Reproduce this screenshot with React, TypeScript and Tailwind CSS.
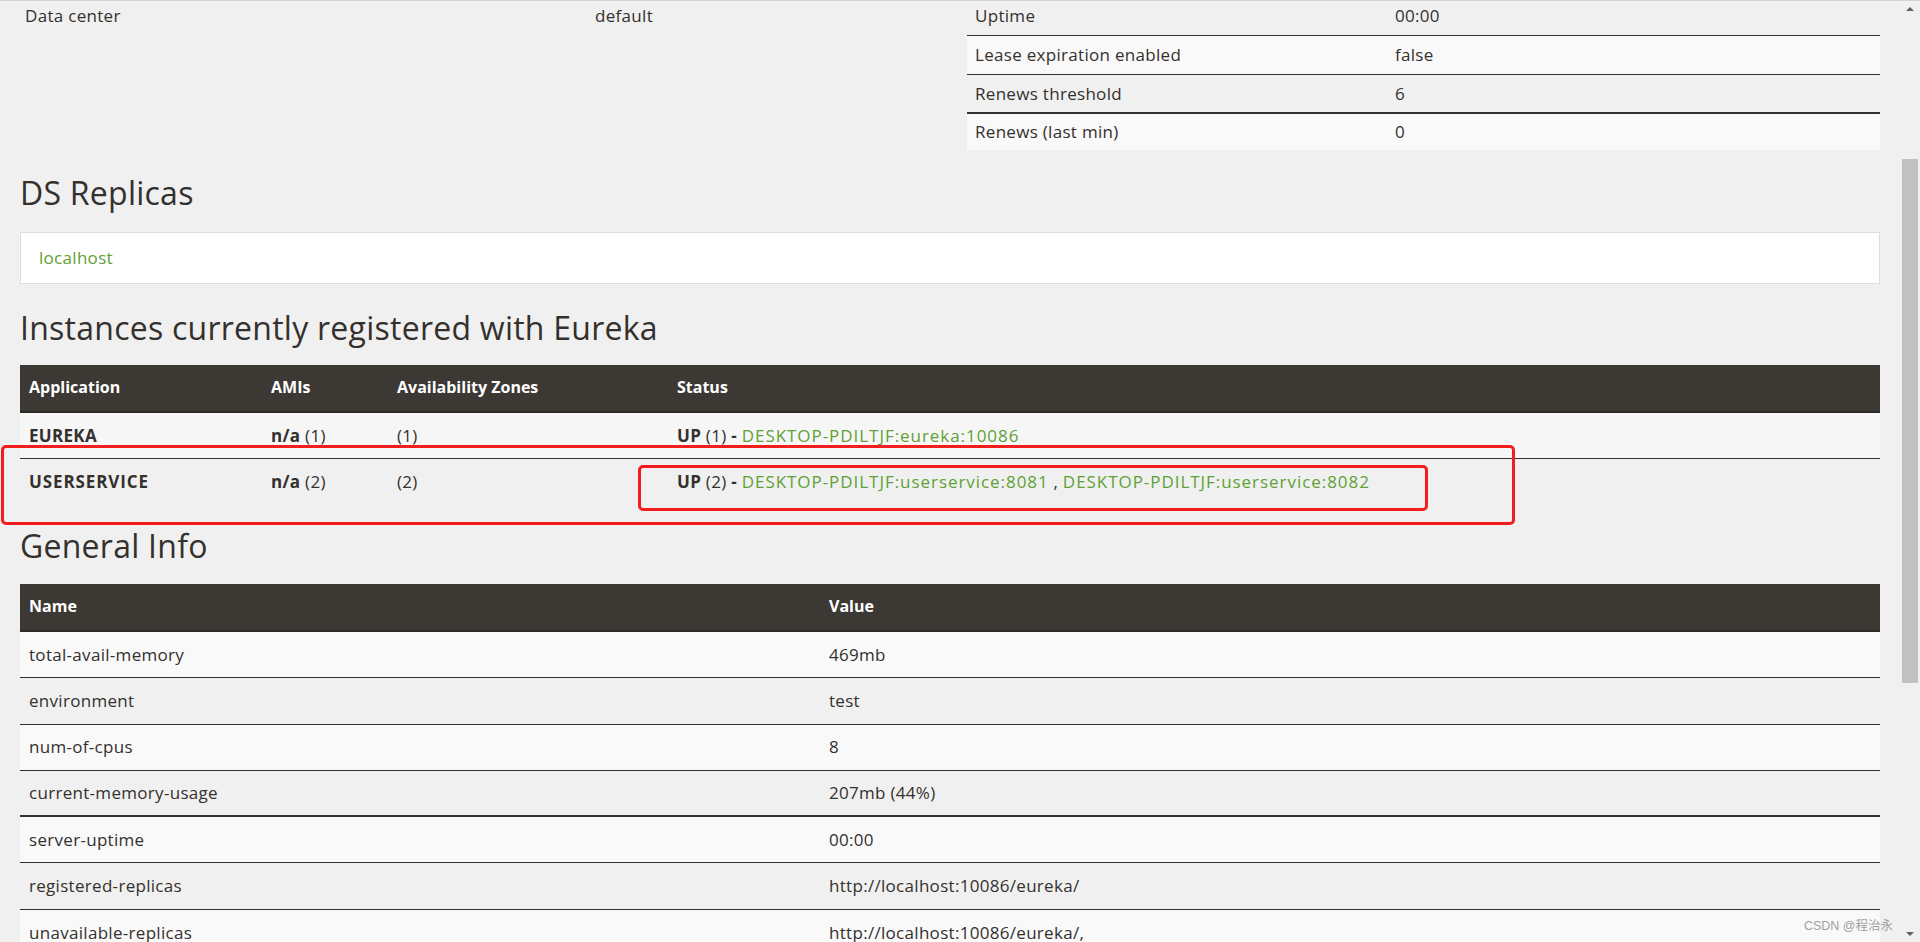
const INSTANCES = [
  {
    app: 'EUREKA',
    amis: '(1)',
    zones: '(1)',
    count: '(1)',
    links: ['DESKTOP-PDILTJF:eureka:10086'],
  },
  {
    app: 'USERSERVICE',
    amis: '(2)',
    zones: '(2)',
    count: '(2)',
    links: ['DESKTOP-PDILTJF:userservice:8081', 'DESKTOP-PDILTJF:userservice:8082'],
  },
];

const GENERAL_INFO: [string, string][] = [
  ['total-avail-memory', '469mb'],
  ['environment', 'test'],
  ['num-of-cpus', '8'],
  ['current-memory-usage', '207mb (44%)'],
  ['server-uptime', '00:00'],
  ['registered-replicas', 'http://localhost:10086/eureka/'],
  ['unavailable-replicas', 'http://localhost:10086/eureka/,'],
];

function SectionTitle({ children, className }: { children: string; className: string }) {
  return (
    <h2 className={`h-[36px] text-[32px] leading-[36px] tracking-[0.25px] font-normal text-[#34302d] ${className}`}>
      {children}
    </h2>
  );
}

function Scrollbar() {
  return (
    <aside className="w-[20px] shrink-0 flex flex-col bg-[#f0f0f0]">
      <div className="h-[16px] flex items-center justify-center">
        <div className="w-0 h-0 border-l-[4px] border-r-[4px] border-b-[4px] border-l-transparent border-r-transparent border-b-[#606060]" />
      </div>
      <div className="h-[142px]" />
      <div className="h-[524px] mx-[2px] bg-[#c1c1c1]" />
      <div className="flex-1" />
      <div className="h-[16px] flex items-center justify-center">
        <div className="w-0 h-0 border-l-[4px] border-r-[4px] border-t-[4px] border-l-transparent border-r-transparent border-t-[#606060]" />
      </div>
    </aside>
  );
}

export default function App() {
  return (
    <div className="relative w-[1920px] h-[942px] overflow-hidden flex bg-[#f0f0f0] border-t border-[#d4d4d4] text-[#34302d] text-[17px] tracking-[0.3px] font-['Open_Sans','Noto_Sans',sans-serif]">
      <main className="flex-1 px-[20px]">
        {/* top: environment + status tables (scrolled, first rows cut) */}
        <div className="-mt-[5px] grid grid-cols-[1fr_913px] gap-[27px]">
          <div>
            <div className="h-[39px] grid grid-cols-[570px_1fr] items-center px-[5px]">
              <span>Data center</span>
              <span>default</span>
            </div>
          </div>
          <div>
            <div className="h-[39px] grid grid-cols-[420px_1fr] items-center px-[8px]">
              <span>Uptime</span>
              <span>00:00</span>
            </div>
            <div className="h-[39px] grid grid-cols-[420px_1fr] items-center px-[8px] border-t border-[#34302d] bg-[#f9f9f9]">
              <span>Lease expiration enabled</span>
              <span>false</span>
            </div>
            <div className="h-[38px] grid grid-cols-[420px_1fr] items-center px-[8px] border-t border-[#34302d]">
              <span>Renews threshold</span>
              <span>6</span>
            </div>
            <div className="h-[38px] grid grid-cols-[420px_1fr] items-center px-[8px] border-t-2 border-[#34302d] bg-[#f9f9f9]">
              <span>Renews (last min)</span>
              <span>0</span>
            </div>
          </div>
        </div>

        <SectionTitle className="mt-[25px]">DS Replicas</SectionTitle>
        <div className="mt-[21px] h-[52px] flex items-center pl-[18px] bg-white border border-[#dddddd]">
          <a className="text-[#5fa134]">localhost</a>
        </div>

        <SectionTitle className="mt-[26px]">Instances currently registered with Eureka</SectionTitle>
        <div className="mt-[19px]">
          <div className="h-[48px] grid grid-cols-[242px_126px_280px_1fr] items-center px-[9px] pb-[3px] bg-[#3c3834] border-b-2 border-[#2e2a27] text-white text-[16px] tracking-normal font-bold">
            <span>Application</span>
            <span>AMIs</span>
            <span>Availability Zones</span>
            <span>Status</span>
          </div>
          {INSTANCES.map((inst, i) => (
            <div
              key={inst.app}
              className={`h-[46px] grid grid-cols-[242px_126px_280px_1fr] items-center px-[9px] ${
                i === 0 ? 'bg-[#f6f6f6] border-b border-[#34302d]' : ''
              }`}
            >
              <b className={i === 1 ? 'tracking-[0.9px]' : ''}>{inst.app}</b>
              <span>
                <b>n/a</b> {inst.amis}
              </span>
              <span>{inst.zones}</span>
              <span>
                <b>UP</b> {inst.count} <b>-</b>{' '}
                {inst.links.map((link, j) => (
                  <span key={link}>
                    {j > 0 && ' , '}
                    <a className="text-[#5fa134] tracking-[0.95px]">{link}</a>
                  </span>
                ))}
              </span>
            </div>
          ))}
        </div>

        <SectionTitle className="mt-[23px]">General Info</SectionTitle>
        <div className="mt-[20px]">
          <div className="h-[48px] grid grid-cols-[800px_1fr] items-center px-[9px] pb-[3px] bg-[#3c3834] border-b-2 border-[#2e2a27] text-white text-[16px] tracking-normal font-bold">
            <span>Name</span>
            <span>Value</span>
          </div>
          {GENERAL_INFO.map(([name, value], i) => (
            <div
              key={name}
              className={`h-[46.3px] grid grid-cols-[800px_1fr] items-center px-[9px] border-[#34302d] ${
                i === 3 ? 'border-b-2' : 'border-b'
              } ${i % 2 === 0 ? 'bg-[#f9f9f9]' : ''}`}
            >
              <span>{name}</span>
              <span>{value}</span>
            </div>
          ))}
        </div>
      </main>

      <Scrollbar />

      {/* red annotation boxes drawn over the screenshot */}
      <div className="absolute left-[1px] top-[444px] w-[1514px] h-[80px] border-[3px] border-[#f21d1d] rounded-[5px]" />
      <div className="absolute left-[638px] top-[464px] w-[790px] h-[46px] border-[3px] border-[#f21d1d] rounded-[5px]" />

      <div className="absolute right-[27px] bottom-[8px] text-[12.5px] leading-[16px] tracking-normal text-[#a0a0a0] font-['Liberation_Sans','Noto_Sans_CJK_SC',sans-serif]">
        CSDN @程治永
      </div>
    </div>
  );
}
